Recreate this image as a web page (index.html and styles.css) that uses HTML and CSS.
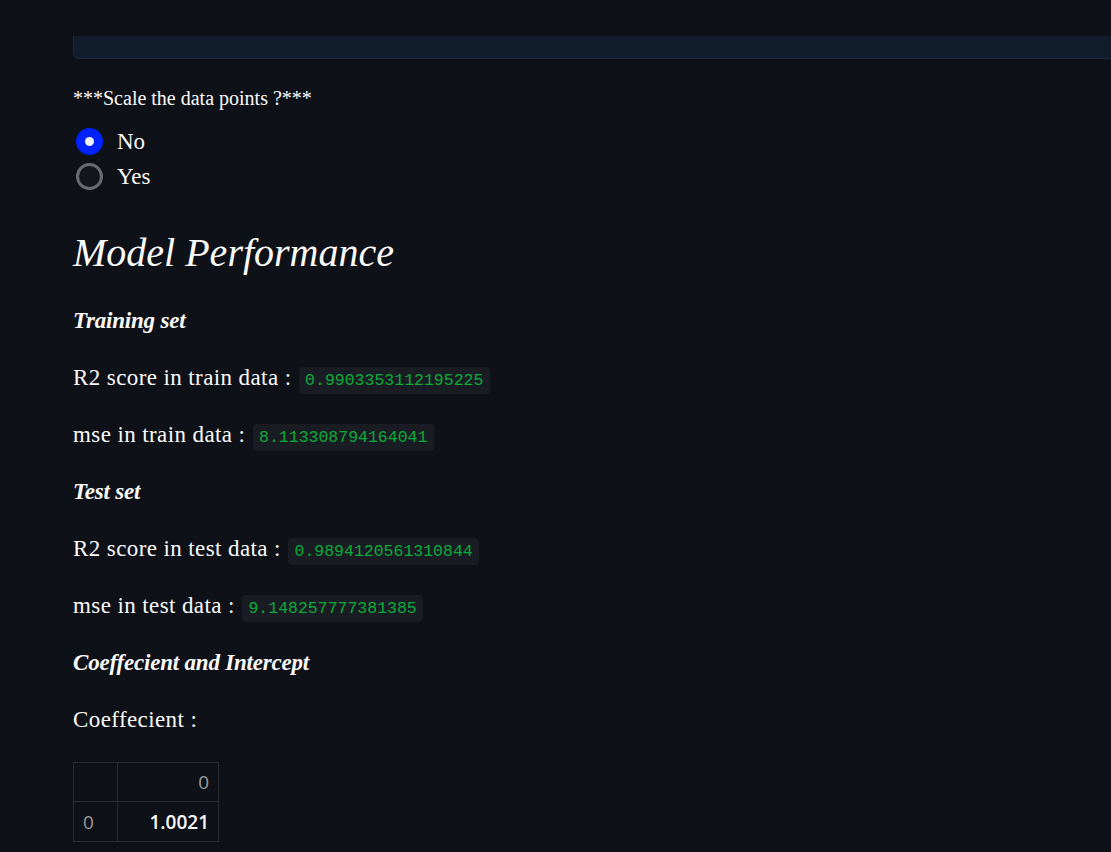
FILE: index.html
```html
<!DOCTYPE html>
<html lang="en">
<head>
<meta charset="utf-8">
<title>Model Performance</title>
<link rel="stylesheet" href="styles.css">
</head>
<body>
<main class="main">
  <div class="topbox"></div>

  <div class="widget-label">***Scale the data points ?***</div>
  <div class="radio-group">
    <label class="radio-row">
      <span class="radio radio-on"><span class="radio-dot"></span></span>
      <span class="radio-text">No</span>
    </label>
    <label class="radio-row">
      <span class="radio radio-off"></span>
      <span class="radio-text">Yes</span>
    </label>
  </div>

  <h2 class="heading">Model Performance</h2>

  <p class="para"><strong><em>Training set</em></strong></p>
  <p class="para">R2 score in train data : <code class="code">0.9903353112195225</code></p>
  <p class="para">mse in train data : <code class="code">8.113308794164041</code></p>
  <p class="para"><strong><em>Test set</em></strong></p>
  <p class="para">R2 score in test data : <code class="code">0.9894120561310844</code></p>
  <p class="para">mse in test data : <code class="code">9.148257777381385</code></p>
  <p class="para"><strong><em>Coeffecient and Intercept</em></strong></p>
  <p class="para">Coeffecient :</p>

  <table class="df">
    <thead>
      <tr><th class="idx-col"></th><th class="val-col">0</th></tr>
    </thead>
    <tbody>
      <tr><th class="idx-col row-idx">0</th><td class="val-col">1.0021</td></tr>
    </tbody>
  </table>
</main>
</body>
</html>
```

FILE: styles.css
```css
html, body {
  margin: 0;
  padding: 0;
  background: #0e1117;
  color: #fafafa;
  font-family: "Liberation Serif", "Times New Roman", serif;
  overflow: hidden;
}

.main {
  padding: 36px 0 0 73px;
  display: flex;
  flex-direction: column;
  align-items: flex-start;
}

.topbox {
  align-self: stretch;
  height: 22px;
  background: #111c2c;
  border-left: 1px solid #1c2a40;
  border-bottom: 1px solid #1c2a40;
  border-bottom-left-radius: 6px;
}

.widget-label {
  margin-top: 25px;
  font-size: 20px;
  line-height: 28px;
}

.radio-group {
  margin-top: 12px;
  display: flex;
  flex-direction: column;
}

.radio-row {
  height: 35px;
  display: flex;
  align-items: center;
  gap: 14px;
  padding-left: 3px;
}

.radio {
  box-sizing: border-box;
  width: 27px;
  height: 27px;
  border-radius: 50%;
  display: flex;
  align-items: center;
  justify-content: center;
}

.radio-on {
  background: #0022ff;
}

.radio-dot {
  width: 9px;
  height: 9px;
  border-radius: 50%;
  background: #f0f2f6;
}

.radio-off {
  border: 3px solid #6a6b70;
  background: #13161d;
}

.radio-text {
  font-size: 23px;
  line-height: 35px;
}

.heading {
  margin: 35px 0 0 0;
  font-size: 40px;
  line-height: 48px;
  font-style: italic;
  font-weight: normal;
}

.para {
  margin: 0;
  font-size: 23px;
  line-height: 35px;
  height: 35px;
  letter-spacing: 0.4px;
  margin-bottom: 22px;
}

.heading + .para {
  margin-top: 26px;
}

.para strong {
  font-weight: bold;
  letter-spacing: -0.2px;
}

.code {
  font-family: "Liberation Mono", "Courier New", monospace;
  font-size: 16.5px;
  line-height: 1;
  letter-spacing: 0;
  color: #09ab3b;
  background: #1a1c23;
  padding: 4px 6.5px;
  border-radius: 4px;
  margin-left: 1px;
}

.df {
  margin-top: 3px;
  border-collapse: collapse;
  font-family: "Open Sans", "Liberation Sans", Arial, sans-serif;
  font-size: 19px;
}

.df th, .df td {
  border: 1px solid #2a2c33;
  padding: 0 9px;
  box-sizing: border-box;
}

.df thead th {
  height: 39px;
  color: #9a9b9f;
  font-weight: normal;
  text-align: right;
}

.df tbody th, .df tbody td {
  height: 40px;
}

.idx-col {
  width: 44px;
}

.val-col {
  width: 101px;
  text-align: right;
}

.row-idx {
  text-align: left;
  color: #9a9b9f;
  font-weight: normal;
}

.df td {
  color: #fafafa;
  font-weight: 600;
}
```
